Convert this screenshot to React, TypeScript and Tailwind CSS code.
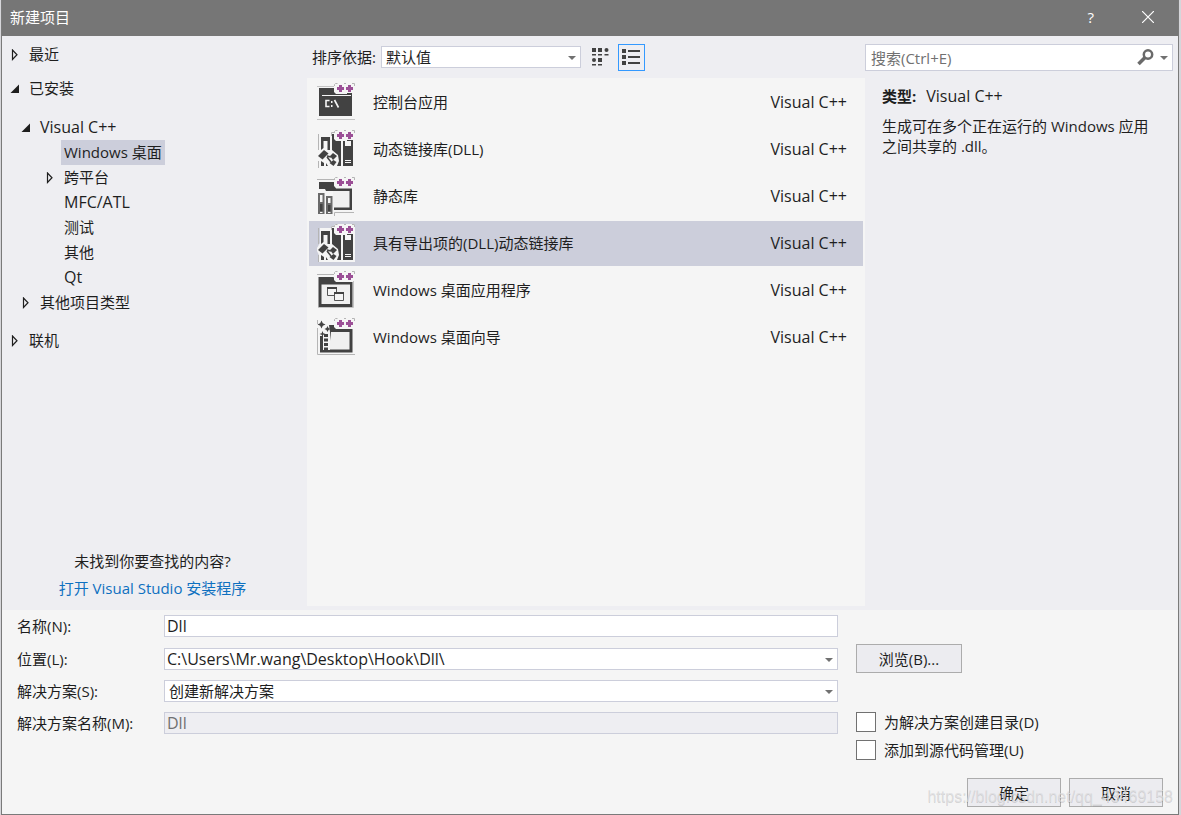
import { useState, type ReactNode } from "react";

type Template = {
  id: string;
  name: string;
  icon: ReactNode;
};

type TreeRow = {
  label: string;
  indent: string;
  state?: "open" | "closed";
  selected?: boolean;
  latin?: boolean;
};

const INK = "#424242";

/** Purple "++" badge that every C++ template icon carries in its top right corner. */
function PlusPlus() {
  return (
    <>
      <path d="M18 0h20v10h-8v1H19l-2-2V2z" fill="#f5f5f5" />
      <path d="M17.500 3V1.500L18.500.500h2M27 .500h2M35 .500h2.500V3" fill="none" stroke="#b5b5b5" />
      <path d="M22 2h3v2h2v3h-2v2h-3V7h-2V4h2zM31 2h3v2h2v3h-2v2h-3V7h-2V4h2z" fill="#9b4f96" />
    </>
  );
}

function TemplateIcon({ children }: { children: ReactNode }) {
  return (
    <svg viewBox="0 0 39 39" className="size-[39px] shrink-0" aria-hidden>
      {children}
      <PlusPlus />
    </svg>
  );
}

function ConsoleIcon() {
  return (
    <TemplateIcon>
      <path d="M0 3.500h18M0 36.500h38" stroke="#c4c4c4" />
      <path d="M2 5h16v5h17v23H2z" fill={INK} />
      <path d="M5 12.500h29" stroke="#f5f5f5" />
      <path d="M28 10v2" stroke={INK} strokeWidth="2" />
      <path d="M12.500 17.500H9v6h3.500M17.500 17l4 7.500" fill="none" stroke="#f5f5f5" strokeWidth="1.600" />
      <path d="M14 18h1.500v2H14zM14 22h1.500v2H14z" fill="#f5f5f5" />
    </TemplateIcon>
  );
}

function DllIcon() {
  return (
    <TemplateIcon>
      <path d="M3 4h11V2h4V0h20v38H2v-7l-2-4v-3l3-5z" fill="#f5f5f5" />
      <path d="M1.500 20V4M1.500 31v7M14.500 6V2.500H17" fill="none" stroke="#b5b5b5" />
      <path d="M4 7h9v13h-2.500v-9h-4v7L4 20z" fill={INK} />
      <path d="M15 4h3l1 7h5v25h-4l2-5-1-6-6-5z" fill={INK} />
      <path d="M26 10h10v26H26z" fill={INK} />
      <path d="M28 11h6v5h-6z" fill="#f5f5f5" />
      <path d="M28 30.500h6M28 32.500h6" stroke="#f5f5f5" />
      <path d="M1 26l6-6 4.500 3.500-6 6z" fill={INK} />
      <path d="M10 26l4 1M10 27l4 5" stroke={INK} strokeWidth="1.500" />
      <path d="M13 26l3-3 4 3-4 4zM12.500 33l4-3 3 2-3 4z" fill={INK} />
      <path d="M4 31l3 2v3H4zM9 33l2 3H9z" fill={INK} />
    </TemplateIcon>
  );
}

function StaticLibraryIcon() {
  return (
    <TemplateIcon>
      <path d="M0 2.500h19M17.500 39v-3.500H37" fill="none" stroke="#b5b5b5" />
      <path d="M2 5h15l2 6.500h16V33H17V14H9l-1-2H2z" fill={INK} />
      <path d="M16 14h16.500v16.500H16z" fill="#f0f0f0" />
      <path d="M1 16h6.500v21H1zM9 19h6.500v18H9z" fill="#6a6a6a" />
      <path d="M3 18h2.500v7H3zM11 21h2.500v5H11z" fill="#f5f5f5" />
      <path d="M3 27h2.500v7H3zM11 28h2.500v6H11z" fill={INK} />
      <path d="M3 35.500h2.500M11 35.500h2.500" stroke="#f5f5f5" />
    </TemplateIcon>
  );
}

function DesktopAppIcon() {
  return (
    <TemplateIcon>
      <path d="M0 3.500h18" stroke="#b5b5b5" />
      <path d="M1.500 6h15l3 5h16v25h-34z" fill={INK} />
      <path d="M4.500 13.500h28.500V33H4.500z" fill="#f0f0f0" />
      <path d="M1 36.500h35.500V10" fill="none" stroke="#c4c4c4" />
      <path d="M28 9v3" stroke={INK} strokeWidth="2" />
      <path d="M10.500 16.500h9v8h-9z" fill="#f5f5f5" stroke="#555" />
      <path d="M10 17h10" stroke={INK} strokeWidth="2" />
      <path d="M17.500 21.500h9v8h-9z" fill="#f5f5f5" stroke="#555" />
      <path d="M17 22h10" stroke={INK} strokeWidth="2" />
    </TemplateIcon>
  );
}

function DesktopWizardIcon() {
  return (
    <TemplateIcon>
      <path d="M.500 2v4M.500 10v26.500H38" fill="none" stroke="#b5b5b5" />
      <path d="M12 7h6l2 4h15.500v23.500H3V18h3v14h7V14z" fill={INK} />
      <path d="M14 14h18.500v17.500H12z" fill="#f0f0f0" />
      <path d="M9 16v16" stroke={INK} strokeWidth="4" strokeDasharray="3 1.500" />
      <path d="M28 9v3" stroke={INK} strokeWidth="2" />
      <path d="M4.500 2.500l1.300 2.700 2.700 1.300-2.700 1.300-1.300 2.700-1.300-2.700L.500 6.500l2.700-1.300zM10.500 8l1 2 2 1-2 1-1 2-1-2-2-1 2-1zM5.500 13l.8 2.200 2.200.8-2.200.8-.8 2.200-.8-2.200L2.500 16l2.200-.8z" fill={INK} />
    </TemplateIcon>
  );
}

const TREE: TreeRow[] = [
  { label: "Visual C++", indent: "pl-[19px]", state: "open", latin: true },
  { label: "Windows 桌面", indent: "pl-[43px]", selected: true },
  { label: "跨平台", indent: "pl-[43px]", state: "closed" },
  { label: "MFC/ATL", indent: "pl-[43px]", latin: true },
  { label: "测试", indent: "pl-[43px]" },
  { label: "其他", indent: "pl-[43px]" },
  { label: "Qt", indent: "pl-[43px]", latin: true },
  { label: "其他项目类型", indent: "pl-[19px]", state: "closed" },
];

const TEMPLATES: Template[] = [
  { id: "console", name: "控制台应用", icon: <ConsoleIcon /> },
  { id: "dll", name: "动态链接库(DLL)", icon: <DllIcon /> },
  { id: "lib", name: "静态库", icon: <StaticLibraryIcon /> },
  { id: "dll-exports", name: "具有导出项的(DLL)动态链接库", icon: <DllIcon /> },
  { id: "desktop-app", name: "Windows 桌面应用程序", icon: <DesktopAppIcon /> },
  { id: "desktop-wizard", name: "Windows 桌面向导", icon: <DesktopWizardIcon /> },
];

function Expander({ state }: { state?: "open" | "closed" }) {
  return (
    <svg viewBox="0 0 10 12" className="h-3 w-[10px] shrink-0" aria-hidden>
      {state === "open" ? <path d="M9 1.500v8.500H.500z" fill="#1e1e1e" /> : null}
      {state === "closed" ? <path d="M2.500 1v9.500l4.500-4.750z" fill="none" stroke="#1e1e1e" strokeWidth="1.200" /> : null}
    </svg>
  );
}

function TreeItem({ label, indent, state, selected, latin }: TreeRow) {
  return (
    <button
      type="button"
      className={`flex h-[25px] w-full items-center gap-[6px] text-left ${latin ? "text-base" : ""} ${indent}`}
    >
      <Expander state={state} />
      <span className={`px-[3px] leading-[25px] ${selected ? "bg-[#cccedb]" : ""}`}>{label}</span>
    </button>
  );
}

function Caret({ className }: { className: string }) {
  return (
    <svg viewBox="0 0 8 4" className={`pointer-events-none h-1 w-2 ${className}`} aria-hidden>
      <path d="M0 0h8L4 4z" fill="#717171" />
    </svg>
  );
}

function SelectBox({ id, options, className }: { id: string; options: string[]; className: string }) {
  return (
    <div className={`relative ${className}`}>
      <select id={id} className="h-[22px] w-full appearance-none border border-[#cccedb] bg-white pr-5 pl-1 leading-5">
        {options.map((o) => (
          <option key={o}>{o}</option>
        ))}
      </select>
      <Caret className="absolute top-[10px] right-[5px]" />
    </div>
  );
}

function CategoryTree() {
  return (
    <aside className="flex w-[305px] shrink-0 flex-col pt-[6px] pb-2">
      <nav>
        <TreeItem label="最近" indent="pl-2" state="closed" />
        <div className="h-[9px]" />
        <TreeItem label="已安装" indent="pl-2" state="open" />
        <div className="pt-[14px] pb-[13px]">
          {TREE.map((row) => (
            <TreeItem key={row.label} {...row} />
          ))}
        </div>
        <TreeItem label="联机" indent="pl-2" state="closed" />
      </nav>
      <div className="mt-auto flex flex-col items-center pr-1 leading-[27px]">
        <p>未找到你要查找的内容?</p>
        <a href="#installer" className="text-[#0e70c0]">
          打开 Visual Studio 安装程序
        </a>
      </div>
    </aside>
  );
}

function SortBar() {
  return (
    <div className="flex h-[42px] items-center pl-[5px]">
      <label htmlFor="sort">排序依据:</label>
      <SelectBox id="sort" options={["默认值", "名称升序", "名称降序"]} className="ml-[5px] w-[200px]" />
      <button type="button" aria-label="小图标" className="ml-[6px] flex size-[27px] items-center justify-center">
        <svg viewBox="0 0 17 18" className="h-[18px] w-[17px]" fill={INK}>
          <path d="M0 0h4v4H0zM6 0h4v4H6zM6 10h4v4H6z" />
          <circle cx="14.500" cy="2" r="2" />
          <circle cx="2" cy="12" r="2" />
          <path d="M0 6h4v1.500H0zM6 6h4v1.500H6zM12.500 6h4v1.500h-4zM0 16h4v1.500H0zM6 16h4v1.500H6z" />
        </svg>
      </button>
      <button type="button" aria-label="列表" className="ml-1 flex size-[27px] items-center justify-center border border-[#3399ff]">
        <svg viewBox="0 0 18 17" className="h-[17px] w-[18px]" fill={INK}>
          <path d="M0 0h4v4H0zM0 6h4v4H0zM0 12h4v4H0zM6 1h12v2H6zM6 7h12v2H6zM6 13h12v2H6z" />
        </svg>
      </button>
    </div>
  );
}

function TemplateList() {
  const [selected, setSelected] = useState("dll-exports");

  return (
    <section className="flex min-w-0 flex-1 flex-col pb-1">
      <SortBar />
      <ul className="flex flex-1 flex-col gap-[2px] bg-[#f5f5f5] p-[2px]">
        {TEMPLATES.map((t) => (
          <li key={t.id}>
            <button
              type="button"
              onClick={() => setSelected(t.id)}
              className={`flex h-[45px] w-full items-center pr-4 pl-2 text-left leading-[23px] ${t.id === selected ? "bg-[#cccedb]" : ""}`}
            >
              {t.icon}
              <span className="ml-[17px] flex-1">{t.name}</span>
              <span className="text-base leading-[23px]">Visual C++</span>
            </button>
          </li>
        ))}
      </ul>
    </section>
  );
}

function DetailsPanel() {
  return (
    <aside className="flex w-[313px] shrink-0 flex-col pt-2 pr-[5px]">
      <div className="flex h-[27px] items-center border border-[#cccedb] bg-white pr-1 pl-[5px]">
        <input
          type="search"
          aria-label="搜索"
          placeholder="搜索(Ctrl+E)"
          className="min-w-0 flex-1 bg-transparent outline-none placeholder:text-[#717171]"
        />
        <svg viewBox="0 0 17 17" className="size-[17px]" aria-hidden>
          <circle cx="11" cy="5.500" r="4.200" fill="none" stroke="#6a6a6a" strokeWidth="2.500" />
          <path d="M8 8.500L1.500 15" stroke="#6a6a6a" strokeWidth="3.500" />
        </svg>
        <Caret className="ml-[6px]" />
      </div>
      <div className="pt-[15px] pr-4 pl-[17px]">
        <p className="flex gap-[10px] leading-5">
          <b>类型:</b>
          <span className="text-base leading-5">Visual C++</span>
        </p>
        <p className="mt-[10px] leading-5">生成可在多个正在运行的 Windows 应用之间共享的 .dll。</p>
      </div>
    </aside>
  );
}

const FIELD = "h-[22px] w-full border border-[#cccedb] px-[2px] text-base leading-5";
const BUTTON = "h-[29px] border border-[#acacac] bg-[#ececf0]";

function ProjectForm() {
  return (
    <div className="flex flex-1 flex-col bg-[#f5f5f5] pt-[5px] pl-[15px]">
      <div className="flex">
        <div className="grid flex-1 grid-cols-[147px_1fr] grid-rows-[33px_repeat(3,32px)] content-start">
          <label htmlFor="name">名称(N):</label>
          <div>
            <input id="name" defaultValue="Dll" className={`${FIELD} bg-white`} />
          </div>
          <label htmlFor="location">位置(L):</label>
          <div className="relative">
            <input id="location" defaultValue="C:\Users\Mr.wang\Desktop\Hook\Dll\" className={`${FIELD} bg-white`} />
            <Caret className="absolute top-[10px] right-[5px]" />
          </div>
          <label htmlFor="solution">解决方案(S):</label>
          <SelectBox id="solution" options={["创建新解决方案", "添加到解决方案"]} className="w-full" />
          <label htmlFor="solution-name">解决方案名称(M):</label>
          <div>
            <input id="solution-name" value="Dll" disabled className={`${FIELD} bg-[#eeeef2] text-[#717171]`} />
          </div>
        </div>
        <div className="w-[340px] shrink-0 pt-[29px] pl-[18px]">
          <button type="button" className={`${BUTTON} w-[106px]`}>
            浏览(B)...
          </button>
          <div className="mt-[35px] flex flex-col">
            <label className="flex h-7 items-center gap-2">
              <input type="checkbox" className="size-5 appearance-none border border-[#717171] bg-white checked:bg-[#717171]" />
              为解决方案创建目录(D)
            </label>
            <label className="flex h-7 items-center gap-2">
              <input type="checkbox" className="size-5 appearance-none border border-[#717171] bg-white checked:bg-[#717171]" />
              添加到源代码管理(U)
            </label>
          </div>
        </div>
      </div>
      <div className="mt-auto flex justify-end gap-2 pr-[15px] pb-[7px]">
        <button type="button" className={`${BUTTON} w-[94px]`}>
          确定
        </button>
        <button type="button" className={`${BUTTON} w-[94px]`}>
          取消
        </button>
      </div>
    </div>
  );
}

export default function App() {
  return (
    <div className="relative flex min-h-screen bg-[#d6d6da] pr-[2px] pl-[1px] font-['Open_Sans','Noto_Sans_CJK_SC',sans-serif] text-[15px] leading-[22px] text-[#1e1e1e]">
      <main className="flex flex-1 flex-col border border-t-0 border-[#7a7a7a] bg-[#eeeef2]">
        <header className="flex h-9 items-center bg-[#767676] pr-6 pb-[2px] pl-2 text-white">
          <h1 className="flex-1">新建项目</h1>
          <button type="button" aria-label="帮助">
            ?
          </button>
          <button type="button" aria-label="关闭" className="ml-12">
            <svg viewBox="0 0 12 12" className="size-3" stroke="#fff" strokeWidth="1.200">
              <path d="M0 0l12 12M12 0L0 12" />
            </svg>
          </button>
        </header>
        <div className="flex min-h-[574px]">
          <CategoryTree />
          <TemplateList />
          <DetailsPanel />
        </div>
        <ProjectForm />
      </main>
      <span className="pointer-events-none absolute right-2 bottom-[6px] font-['Liberation_Sans',sans-serif] text-base text-[#dedee0]/80 text-shadow-2xs">
        https://blog.csdn.net/qq_43469158
      </span>
    </div>
  );
}
